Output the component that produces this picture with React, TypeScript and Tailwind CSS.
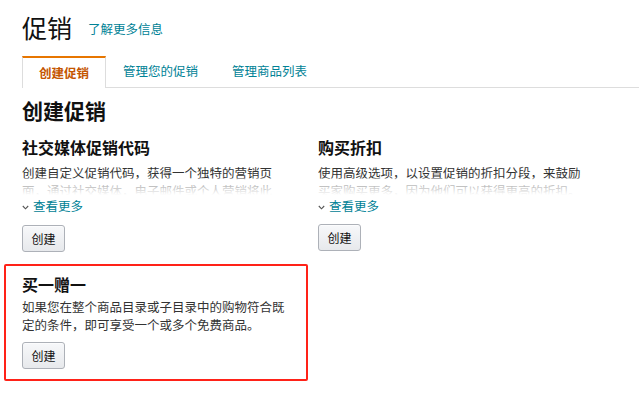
import React from "react";

const font = { fontFamily: '"Noto Sans CJK SC", "Liberation Sans", sans-serif' };

function Fade({ children, w }: { children: React.ReactNode; w: string }) {
  return (
    <div className={`relative h-[31px] overflow-hidden ${w}`}>
      <p className="text-[12.5px] leading-[18px] text-[#333]">{children}</p>
      <div className="absolute left-0 right-0 top-[14px] h-[17px] bg-gradient-to-b from-white/40 to-white" />
    </div>
  );
}

function More() {
  return (
    <div className="mt-[2px] flex items-center gap-[4px] h-[18px]">
      <svg width="7" height="5" viewBox="0 0 7 5" className="mt-[2px]">
        <path d="M0.8 1 L3.5 3.8 L6.2 1" fill="none" stroke="#555" strokeWidth="1.1" />
      </svg>
      <span className="text-[12.5px] text-[#008296]">查看更多</span>
    </div>
  );
}

function Btn({ className = "" }: { className?: string }) {
  return (
    <button
      className={`h-[27px] w-[43px] rounded-[3px] border border-[#adb1b8] bg-gradient-to-b from-[#f7f8fa] to-[#e7e9ec] text-[12px] text-[#111] shadow-[0_1px_0_rgba(255,255,255,0.6)_inset] ${className}`}
    >
      创建
    </button>
  );
}

export default function App() {
  return (
    <div className="w-[639px] h-[398px] bg-white overflow-hidden" style={font}>
      <div className="flex items-end pl-[22px] pt-[4px] h-[44px]">
        <h1 className="text-[25px] leading-[34px] text-[#111] font-normal">促销</h1>
        <a className="ml-[16px] mb-[5px] text-[12.5px] text-[#008296]">了解更多信息</a>
      </div>

      <div className="mt-[12px] flex items-end h-[32px] pl-[22px]">
        <div className="h-[32px] px-[16px] flex items-center border-t-2 border-x border-t-[#e77600] border-x-[#ddd] bg-white">
          <span className="text-[12.5px] text-[#c45500] font-bold">创建促销</span>
        </div>
        <div className="flex-1 h-[32px] flex items-center border-b border-[#ddd]">
          <span className="px-[17px] text-[12.5px] text-[#008296]">管理您的促销</span>
          <span className="px-[17px] text-[12.5px] text-[#008296]">管理商品列表</span>
        </div>
      </div>

      <h2 className="pl-[22px] mt-[9px] text-[21px] leading-[26px] font-bold text-[#111]">创建促销</h2>

      <div className="flex pl-[22px] mt-[14px]">
        <div className="w-[296px]">
          <h3 className="text-[16px] leading-[20px] font-bold text-[#111]">社交媒体促销代码</h3>
          <div className="mt-[7px]">
            <Fade w="w-[256px]">
              创建自定义促销代码，获得一个独特的营销页面，通过社交媒体，电子邮件或个人营销将此页面分享给买家。
            </Fade>
          </div>
          <More />
          <Btn className="mt-[10px]" />
        </div>
        <div className="w-[300px]">
          <h3 className="text-[16px] leading-[20px] font-bold text-[#111]">购买折扣</h3>
          <div className="mt-[7px]">
            <Fade w="w-[272px]">
              使用高级选项，以设置促销的折扣分段，来鼓励买家购买更多，因为他们可以获得更高的折扣。
            </Fade>
          </div>
          <More />
          <Btn className="mt-[9px]" />
        </div>
      </div>

      <div className="ml-[4px] mt-[12px] w-[304px] h-[117px] rounded-[2px] border-2 border-[#ff2218] pl-[16px] pt-[8px]">
        <h3 className="text-[16px] leading-[20px] font-bold text-[#111]">买一赠一</h3>
        <p className="mt-[4px] w-[270px] text-[12.5px] leading-[18px] text-[#333]">
          如果您在整个商品目录或子目录中的购物符合既定的条件，即可享受一个或多个免费商品。
        </p>
        <Btn className="mt-[8px]" />
      </div>
    </div>
  );
}
